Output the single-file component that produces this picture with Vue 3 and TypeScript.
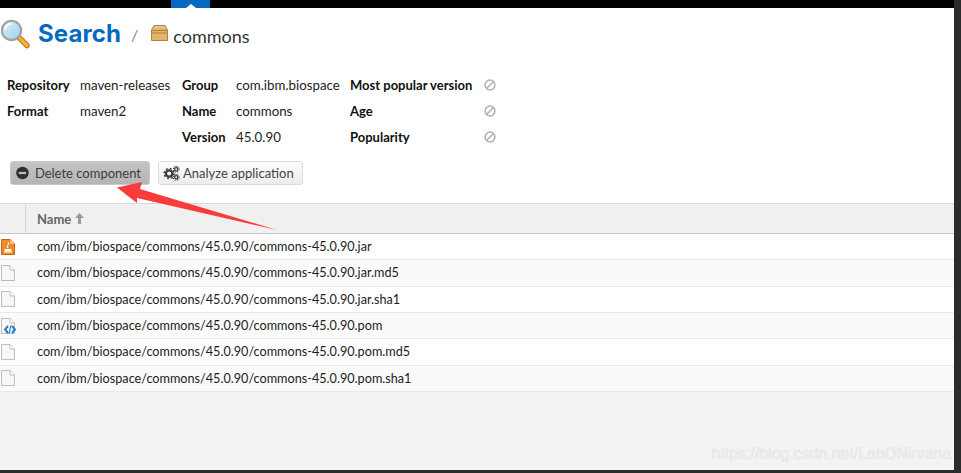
<template>
  <div class="screen">
    <div class="page">
      <div class="top-bar">
        <div class="top-tab"><span class="tab-notch"></span></div>
      </div>

      <header class="title-row">
        <svg class="search-icon" width="31" height="32" viewBox="0 0 31 32">
          <defs>
            <linearGradient id="lens" x1="0" y1="0" x2="1" y2="1">
              <stop offset="0" stop-color="#d8effb" />
              <stop offset="1" stop-color="#9fd0f0" />
            </linearGradient>
          </defs>
          <path d="M18 19.500 L26 27.500" stroke="#b97a1e" stroke-width="5.500" stroke-linecap="round" />
          <path d="M19 20.500 L26 27.500" stroke="#f5b23f" stroke-width="3.200" stroke-linecap="round" />
          <circle cx="10.500" cy="12.500" r="9.600" fill="url(#lens)" stroke="#a3a3a3" stroke-width="2.200" />
          <path d="M4 12 A6.500 6.500 0 0 1 10.500 5.500" stroke="#fff" stroke-width="2" fill="none" />
        </svg>
        <h1 class="title">Search</h1>
        <span class="crumb-sep">/</span>
        <svg class="box-icon" width="17" height="16" viewBox="0 0 17 16">
          <path d="M3 .5 H14 L16.500 5 V15.500 H.5 V5 Z" fill="#e4b468" stroke="#a98447" />
          <path d="M1 5.500 H16 M1 8 H16" stroke="#a98447" />
          <path d="M3.500 2 H13.500" stroke="#f4d9a8" />
        </svg>
        <span class="crumb">commons</span>
      </header>

      <section class="summary">
        <dl v-for="col in summary" :key="col.id" class="summary-col" :class="col.id">
          <div v-for="item in col.items" :key="item.label" class="summary-row">
            <dt>{{ item.label }}</dt>
            <dd v-if="item.value">{{ item.value }}</dd>
            <dd v-else>
              <svg class="na-icon" width="12" height="12" viewBox="0 0 12 12">
                <circle cx="6" cy="6" r="4.900" fill="none" stroke="#aeaeae" stroke-width="1.500" />
                <path d="M2.800 9.200 L9.200 2.800" stroke="#aeaeae" stroke-width="1.500" />
              </svg>
            </dd>
          </div>
        </dl>
      </section>

      <div class="actions">
        <button class="btn btn-active">
          <svg width="14" height="14" viewBox="0 0 14 14">
            <circle cx="7" cy="7" r="6.800" fill="#2f2f2f" />
            <rect x="3" y="5.800" width="8" height="2.400" fill="#bdbdbd" />
          </svg>
          Delete component
        </button>
        <button class="btn">
          <svg width="17" height="16" viewBox="0 0 18 16">
            <g fill="none" stroke="#3a3a3a">
              <circle cx="6.500" cy="8.500" r="3.400" stroke-width="2.400" />
              <circle cx="6.500" cy="8.500" r="5.300" stroke-width="1.600" stroke-dasharray="2 2.160" />
              <circle cx="14" cy="4" r="1.700" stroke-width="1.300" />
              <circle cx="14" cy="4" r="3.100" stroke-width="1.100" stroke-dasharray="1.300 1.130" />
              <circle cx="14" cy="12.500" r="1.700" stroke-width="1.300" />
              <circle cx="14" cy="12.500" r="3.100" stroke-width="1.100" stroke-dasharray="1.300 1.130" />
            </g>
          </svg>
          Analyze application
        </button>
      </div>

      <div class="grid-head">
        <div class="icon-cell"></div>
        <div class="name-head">
          Name
          <svg width="9" height="11" viewBox="0 0 9 11">
            <path d="M4.500 0 L9 5 H6 V11 H3 V5 H0 Z" fill="#9a9a9a" />
          </svg>
        </div>
      </div>

      <div class="grid-body">
        <div v-for="file in files" :key="file.path" class="file-row">
          <div class="file-icon">
            <svg width="14" height="16" viewBox="0 0 14 16">
              <template v-if="file.kind === 'jar'">
                <path d="M.5 .5 H9.500 L13.500 4.500 V15.500 H.5 Z" fill="#f08a24" stroke="#c76a12" />
                <path d="M9.500 .5 V4.500 H13.500 Z" fill="#fde3c4" />
                <path d="M7 3 C9 6 5 6 7 9 M3 13 H11 M4 10.500 H10 V12 H4 Z" stroke="#fff" fill="#fff" stroke-width="1" />
              </template>
              <template v-else>
                <path d="M.5 .5 H9 L13.500 5 V15.500 H.5 Z" fill="#f7f7f7" stroke="#bdbdbd" />
                <path d="M9 .5 V5 H13.500" fill="#fff" stroke="#bdbdbd" />
              </template>
            </svg>
            <svg v-if="file.kind === 'pom'" class="pom-badge" width="12" height="9" viewBox="0 0 12 9">
              <path d="M4 1 L1 4.500 L4 8 M8 1 L11 4.500 L8 8" fill="none" stroke="#1f78c8" stroke-width="2" />
              <path d="M6.800 .5 L5.200 8.500" stroke="#1f78c8" stroke-width="1.200" />
            </svg>
          </div>
          <div class="file-path">{{ file.path }}</div>
        </div>
      </div>

      <div class="watermark">https://blog.csdn.net/LabDNirvana</div>

      <svg class="arrow" width="170" height="60" viewBox="0 0 170 60">
        <path d="M0 5.500 L25 0 L23 7 L160 48 L20 16 L20 21 Z" fill="#f93b3b" />
      </svg>
    </div>
  </div>
</template>

<script setup lang="ts">
interface SummaryItem {
  label: string
  value?: string
}

interface SummaryCol {
  id: string
  items: SummaryItem[]
}

interface FileRow {
  path: string
  kind: 'jar' | 'pom' | 'plain'
}

const summary: SummaryCol[] = [
  {
    id: 'repo',
    items: [
      { label: 'Repository', value: 'maven-releases' },
      { label: 'Format', value: 'maven2' }
    ]
  },
  {
    id: 'coords',
    items: [
      { label: 'Group', value: 'com.ibm.biospace' },
      { label: 'Name', value: 'commons' },
      { label: 'Version', value: '45.0.90' }
    ]
  },
  {
    id: 'stats',
    items: [
      { label: 'Most popular version' },
      { label: 'Age' },
      { label: 'Popularity' }
    ]
  }
]

const base = 'com/ibm/biospace/commons/45.0.90/commons-45.0.90'

const files: FileRow[] = [
  { path: `${base}.jar`, kind: 'jar' },
  { path: `${base}.jar.md5`, kind: 'plain' },
  { path: `${base}.jar.sha1`, kind: 'plain' },
  { path: `${base}.pom`, kind: 'pom' },
  { path: `${base}.pom.md5`, kind: 'plain' },
  { path: `${base}.pom.sha1`, kind: 'plain' }
]
</script>

<style>
html,
body {
  margin: 0;
  background: #2b2b2b;
  overflow: hidden;
}
</style>

<style scoped>
.screen {
  width: 961px;
  height: 473px;
  padding: 0 7px 3px 0;
  box-sizing: border-box;
  font-family: Lato, "Liberation Sans", sans-serif;
}

.page {
  position: relative;
  height: 100%;
  background: #f3f3f3;
  display: flex;
  flex-direction: column;
  overflow: hidden;
}

.top-bar {
  height: 8px;
  background: #000;
  padding-left: 171px;
  flex-shrink: 0;
}

.top-tab {
  width: 39px;
  height: 8px;
  background: #0569bf;
  display: flex;
  justify-content: center;
  align-items: flex-end;
}

.tab-notch {
  width: 0;
  height: 0;
  border-left: 5px solid transparent;
  border-right: 5px solid transparent;
  border-bottom: 4px solid #fff;
}

.title-row {
  display: flex;
  align-items: center;
  height: 52px;
  background: #fff;
  box-sizing: border-box;
}

.search-icon {
  margin-left: 1px;
}

.title {
  margin: 0 0 0 6px;
  font-family: Inter, "Liberation Sans", sans-serif;
  font-size: 24px;
  font-weight: 700;
  color: #0569bf;
  line-height: 30px;
  letter-spacing: 0.1px;
}

.crumb-sep {
  margin-left: 10px;
  font-size: 16px;
  color: #7d8a96;
}

.box-icon {
  margin-left: 13px;
  margin-top: -3px;
}

.crumb {
  margin-left: 5px;
  font-size: 18px;
  color: #333;
  margin-top: 3px;
}

.summary {
  height: 101px;
  background: #fff;
  display: flex;
  padding: 12px 0 0 7px;
  box-sizing: border-box;
  font-size: 13px;
  color: #222;
}

.summary-col {
  margin: 0;
}

.summary-row {
  display: flex;
  height: 26px;
  align-items: center;
}

.summary-row dt {
  font-weight: 700;
  color: #111;
}

.summary-row dd {
  margin: 0;
  display: flex;
  align-items: center;
  font-size: 13.300px;
}

.repo {
  width: 175px;
}

.repo dt {
  width: 73px;
}

.coords {
  width: 168px;
}

.coords dt {
  width: 54px;
}

.stats dt {
  width: 134px;
}

.actions {
  height: 42px;
  background: #fff;
  display: flex;
  gap: 8px;
  padding: 0 0 0 10px;
  flex-shrink: 0;
}

.btn {
  height: 24px;
  box-sizing: border-box;
  padding: 0 8px 0 4px;
  display: flex;
  align-items: center;
  gap: 3px;
  border: 1px solid #dcdcdc;
  border-radius: 3px;
  background: linear-gradient(#fdfdfd, #ececec);
  font-family: Lato, "Liberation Sans", sans-serif;
  font-size: 13px;
  color: #444;
  white-space: nowrap;
}

.btn-active {
  width: 140px;
  padding-left: 5px;
  gap: 6px;
  background: linear-gradient(#c4c4c4, #b4b4b4);
  border-color: #c8c8c8;
  color: #3c3c3c;
}

.grid-head {
  height: 31px;
  box-sizing: border-box;
  display: flex;
  align-items: stretch;
  background: #f0f0f0;
  border-top: 1px solid #d6d6d6;
  border-bottom: 1px solid #c8c8c8;
  flex-shrink: 0;
}

.icon-cell {
  width: 25px;
  border-right: 1px solid #d4d4d4;
}

.name-head {
  display: flex;
  align-items: center;
  gap: 4px;
  padding-left: 11px;
  font-size: 13px;
  font-weight: 700;
  color: #666;
}

.grid-body {
  display: flex;
  flex-direction: column;
  flex-shrink: 0;
}

.file-row {
  height: 26.33px;
  box-sizing: border-box;
  display: flex;
  align-items: center;
  background: #fff;
  border-bottom: 1px solid #e9e9e9;
}

.file-row:nth-child(even) {
  background: #fafafa;
}

.file-icon {
  position: relative;
  width: 37px;
  padding-left: 1px;
  box-sizing: border-box;
  display: flex;
  align-items: center;
  flex-shrink: 0;
}

.pom-badge {
  position: absolute;
  left: 4px;
  bottom: 0;
}

.file-path {
  font-size: 12.660px;
  color: #1c1c1c;
  white-space: nowrap;
}

.watermark {
  position: absolute;
  right: 3px;
  bottom: 7px;
  font-family: "Liberation Sans", sans-serif;
  font-size: 15.900px;
  color: #ebebeb;
  text-shadow: 0 0 1px #ddd;
}

.arrow {
  position: absolute;
  left: 117px;
  top: 182px;
}
</style>
